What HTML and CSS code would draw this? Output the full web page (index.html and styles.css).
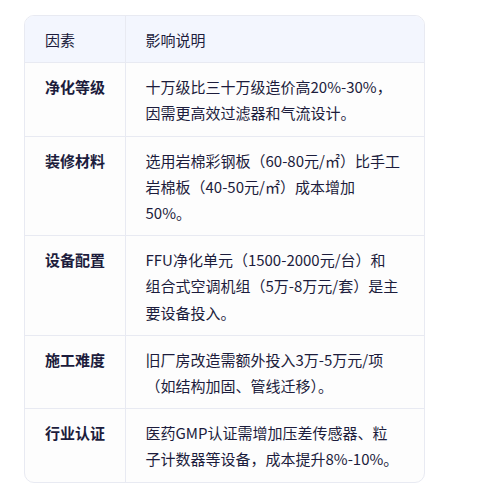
FILE: index.html
```html
<!DOCTYPE html>
<html lang="zh">
<head>
<meta charset="utf-8">
<link rel="stylesheet" href="styles.css">
</head>
<body>
<div class="card">
  <table class="factors">
    <thead>
      <tr><th class="c1">因素</th><th class="c2">影响说明</th></tr>
    </thead>
    <tbody>
      <tr><td class="c1">净化等级</td><td class="c2">十万级比三十万级造价高20%-30%，<br>因需更高效过滤器和气流设计。</td></tr>
      <tr><td class="c1">装修材料</td><td class="c2">选用岩棉彩钢板（60-80元/㎡）比手工<br>岩棉板（40-50元/㎡）成本增加<br>50%。</td></tr>
      <tr><td class="c1">设备配置</td><td class="c2">FFU净化单元（1500-2000元/台）和<br>组合式空调机组（5万-8万元/套）是主<br>要设备投入。</td></tr>
      <tr><td class="c1">施工难度</td><td class="c2">旧厂房改造需额外投入3万-5万元/项<br>（如结构加固、管线迁移）。</td></tr>
      <tr><td class="c1">行业认证</td><td class="c2">医药GMP认证需增加压差传感器、粒<br>子计数器等设备，成本提升8%-10%。</td></tr>
    </tbody>
  </table>
</div>
</body>
</html>
```
FILE: styles.css
```css
html, body { margin: 0; padding: 0; background: #ffffff; }
body {
  font-family: "Noto Sans CJK SC", "Noto Sans", sans-serif;
  font-size: 15px;
  color: #1c1c3c;
}
.card {
  width: 401px;
  margin: 15px 0 0 24px;
  border: 1px solid #e8eaf2;
  border-radius: 10px;
  overflow: hidden;
  box-sizing: border-box;
  background: #fdfdfd;
}
.factors {
  width: 100%;
  border-collapse: collapse;
  table-layout: fixed;
}
.factors th, .factors td {
  text-align: left;
  vertical-align: top;
  padding: 11px 20px 9px;
  line-height: 26.2px;
  white-space: nowrap;
  border-left: 1px solid #e8eaf2;
  border-top: 1px solid #e8eaf2;
}
.factors th { font-weight: 400; }
.factors thead tr { background: #f3f6fe; }
.factors thead th { border-top: none; }
.factors .c1 { width: 100px; border-left: none; box-sizing: border-box; }
.factors td.c1 { font-weight: 600; }
```
